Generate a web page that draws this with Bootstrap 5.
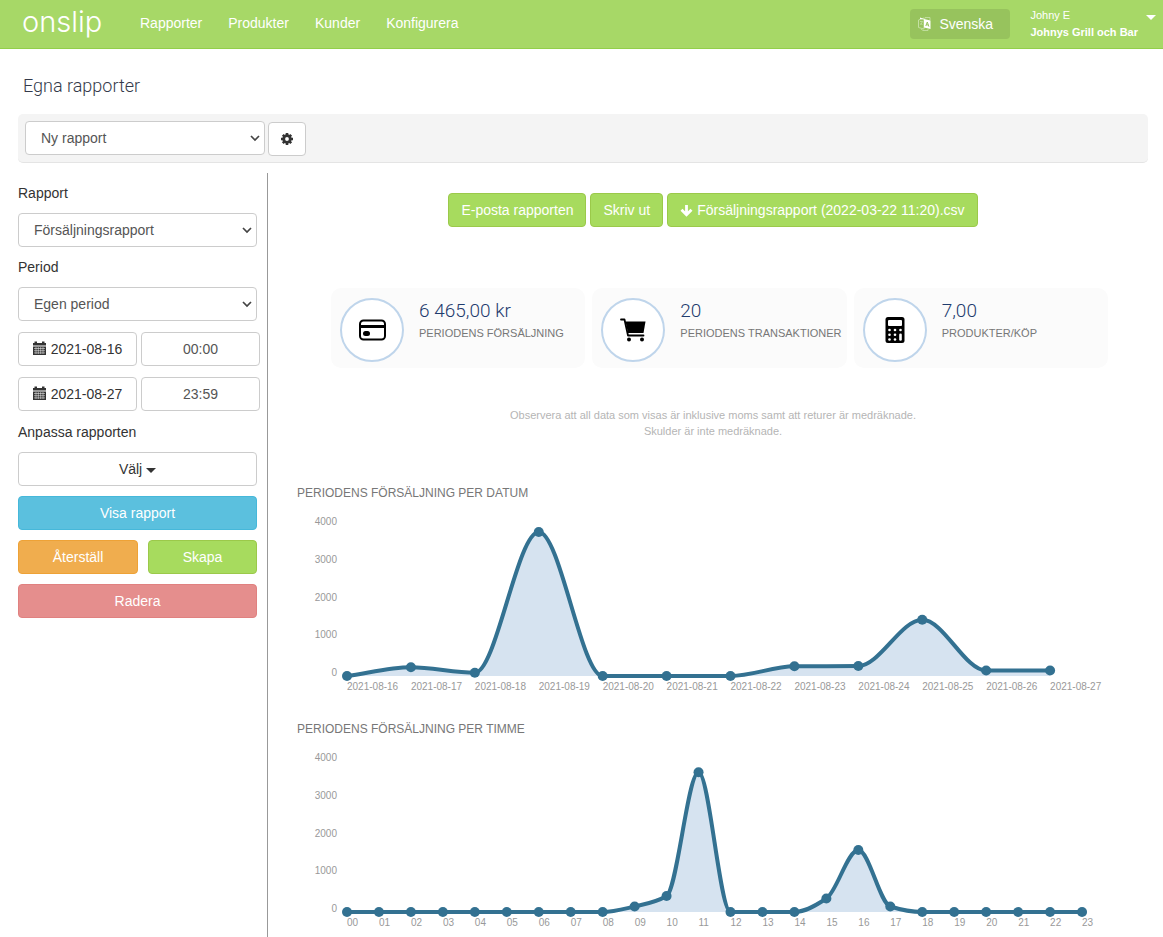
<!DOCTYPE html>
<html lang="sv">
<head>
<meta charset="utf-8">
<meta name="viewport" content="width=device-width, initial-scale=1">
<title>Egna rapporter – Onslip</title>
<link href="https://cdn.jsdelivr.net/npm/bootstrap@5.3.0/dist/css/bootstrap.min.css" rel="stylesheet">
<style>
  body { font-family: "Liberation Sans", Arial, sans-serif; font-size: 14px; line-height: 20px; color: #333; background: #fff; }
  .topbar { background: #a7d867; border-bottom: 1px solid #92cf4a; padding: 0 7px 0 22px; min-height: 49px; }
  .logo { font: 300 29px/44px Inter, sans-serif; color: #fff; width: 105px; height: 44px; }
  .logo:hover { color: #fff; }
  .topbar .nav-link { color: #fff; padding: 13px 13px 15px; }
  .lang-btn { background: #97c35d; color: #fff; width: 100px; height: 30px; border: 0; border-radius: 4px; padding: 0 8px; margin-top: 9px; font-size: 14px; }
  .user-btn { background: none; border: 0; color: #fff; font-size: 11px; line-height: 17px; text-align: left; padding: 7px 0 0; }
  .caret { display: inline-block; border: 5px solid transparent; border-top-color: currentColor; border-bottom: 0; vertical-align: middle; }
  .page-title { font: 300 18px/24px Roboto, sans-serif; color: #343a4a; padding: 25px 23px 16px; margin: 0; }
  .toolbar { margin: 0 15px 10px 18px; padding: 7px 7px 6px; background: #f4f4f4; border-bottom: 1px solid #e4e4e4; border-radius: 5px; gap: 3px; }
  .toolbar .form-select { width: 240px; margin-bottom: 1px; }
  .form-select, .form-control, .btn { height: 34px; font-size: 14px; line-height: 20px; border-radius: 4px; }
  .form-select, .form-control { border-color: #ccc; color: #555; }
  .form-select { padding: 6px 24px 6px 15px; background-size: 12px 12px; background-position: right 3px center;
    background-image: url("data:image/svg+xml,%3csvg xmlns='http://www.w3.org/2000/svg' viewBox='0 0 12 12'%3e%3cpath fill='none' stroke='%23444' stroke-width='1.7' d='M2 4l4 4 4-4'/%3e%3c/svg%3e"); }
  .btn { padding: 6px 12px; }
  .btn-plain { background: #fff; border-color: #ccc; color: #333; }
  .btn-green { background: #a7db5e; border-color: #9bc94a; color: #fff; }
  .btn-blue { background: #5bc0de; border-color: #46b8da; color: #fff; }
  .btn-orange { background: #f0ad4e; border-color: #eea236; color: #fff; }
  .btn-red { background: #e58e8d; border-color: #e08180; color: #fff; }
  .sidebar { width: 268px; padding: 10px 7px 20px 18px; border-right: 1px solid #999; }
  .side-block { margin-right: 3px; }
  .sidebar label, .side-label { display: block; margin: 0 0 10px; }
  .sidebar .form-select { margin-bottom: 10px; }
  .period-rows { display: grid; gap: 11px; padding: 1px 0 11px; }
  .period-row { display: grid; grid-template-columns: 1fr 1fr; gap: 4px; }
  .period-row .btn { padding: 6px 0; }
  .cal-icon { width: 13px; height: 14px; vertical-align: -1px; margin-right: 5px; }
  .side-actions { display: grid; gap: 10px; grid-template-columns: 120fr 109fr; }
  .side-actions .wide { grid-column: 1 / -1; }
  .report { margin-right: 5px; padding: 20px 29px 0; min-width: 0; }
  .report-actions { gap: 4px; margin-bottom: 61px; }
  .stats { display: grid; grid-template-columns: repeat(3, 1fr); gap: 7px; margin: 0 21px 39px 34px; }
  .stat { display: flex; height: 80px; background: #fbfbfb; border-radius: 10px; padding: 10px 0 0 9px; gap: 15px; }
  .stat-icon { width: 64px; height: 64px; flex: none; border: 2px solid #bfd5eb; border-radius: 50%; background: #fff; display: flex; align-items: center; justify-content: center; }
  .stat-value { font: 300 19px/26px Roboto, sans-serif; color: #1f3c6e; }
  .stat-label { font-size: 11px; line-height: 18px; color: #777; white-space: nowrap; }
  .note { font-size: 11px; line-height: 16px; color: #b5b5b5; margin: 0 0 45px; }
  .chart-title { font-size: 12px; line-height: 18px; color: #777; margin: 0; }
  .chart-box { height: 218px; }
  .chart-box svg { display: block; width: 100%; height: 100%; overflow: visible; }
  .chart-box text { font-size: 10px; fill: #999; }
</style>
</head>
<body class="d-flex flex-column min-vh-100">
<header class="topbar d-flex align-items-start">
  <a class="logo text-decoration-none" href="#">onslip</a>
  <nav class="nav me-auto" aria-label="Huvudmeny">
    <a class="nav-link" href="#">Rapporter</a>
    <a class="nav-link" href="#">Produkter</a>
    <a class="nav-link" href="#">Kunder</a>
    <a class="nav-link" href="#">Konfigurera</a>
  </nav>
  <div class="d-flex align-items-start">
    <button class="lang-btn d-flex align-items-center gap-2" type="button">
      <svg width="13" height="14" viewBox="0 0 13 14" aria-hidden="true">
        <path d="M.5 3 6 1v11L.5 10.500z" fill="none" stroke="#c4e0a3"/>
        <path d="M2 4.500h2.500L2.500 8M2.500 6l2 2" fill="none" stroke="#c4e0a3" stroke-width=".8"/>
        <path d="M7 1.500V.5h5V3m-9 9 2 1.500h5V12" fill="none" stroke="#c4e0a3" stroke-width=".9"/>
        <path d="M2 .5 6 2l6.500 1.500V12L6 10.500V2.500L2 2z" fill="#fff"/>
        <path d="M7.800 9l1.500-4 1.600 4.600M8.300 7.700l2 .3" fill="none" stroke="#97c35d"/>
      </svg>
      Svenska
    </button>
    <button class="user-btn d-flex ms-3" type="button">
      <span class="ps-1 pe-2">Johny E<br><strong>Johnys Grill och Bar</strong></span>
      <span class="caret mt-2"></span>
    </button>
  </div>
</header>

<h1 class="page-title">Egna rapporter</h1>

<div class="toolbar d-flex align-items-end">
  <select class="form-select" aria-label="Sparad rapport"><option>Ny rapport</option></select>
  <button class="btn btn-plain d-flex align-items-center" type="button" aria-label="Inställningar">
    <svg width="12" height="12" viewBox="0 0 12 12" aria-hidden="true">
      <path d="M6 0v12M0 6h12M1.800 1.800l8.400 8.400M10.200 1.800l-8.400 8.400" stroke="#333" stroke-width="2.600"/>
      <circle cx="6" cy="6" r="3.300" fill="#fff" stroke="#333" stroke-width="2.800"/>
    </svg>
  </button>
</div>

<div class="d-flex flex-grow-1">
  <aside class="sidebar flex-shrink-0">
    <div class="side-block">
      <label for="report">Rapport</label>
      <select class="form-select" id="report"><option>Försäljningsrapport</option></select>
      <label for="period">Period</label>
      <select class="form-select" id="period"><option>Egen period</option></select>
    </div>
    <div class="period-rows">
      <div class="period-row">
        <button class="btn btn-plain" type="button"><svg class="cal-icon" viewBox="0 0 13 14" aria-hidden="true"><use href="#cal"/></svg>2021-08-16</button>
        <input class="form-control text-center" aria-label="Från klockan" value="00:00">
      </div>
      <div class="period-row">
        <button class="btn btn-plain" type="button"><svg class="cal-icon" viewBox="0 0 13 14" aria-hidden="true"><use href="#cal"/></svg>2021-08-27</button>
        <input class="form-control text-center" aria-label="Till klockan" value="23:59">
      </div>
    </div>
    <div class="side-block">
      <div class="side-label">Anpassa rapporten</div>
      <div class="side-actions">
        <button class="btn btn-plain wide" type="button">Välj <span class="caret"></span></button>
        <button class="btn btn-blue wide" type="button">Visa rapport</button>
        <button class="btn btn-orange" type="button">Återställ</button>
        <button class="btn btn-green" type="button">Skapa</button>
        <button class="btn btn-red wide" type="button">Radera</button>
      </div>
    </div>
  </aside>

  <main class="report flex-grow-1">
    <div class="report-actions d-flex flex-wrap justify-content-center">
      <button class="btn btn-green" type="button">E-posta rapporten</button>
      <button class="btn btn-green" type="button">Skriv ut</button>
      <button class="btn btn-green" type="button"><svg class="me-1" width="13" height="12" viewBox="0 0 13 12" aria-hidden="true"><path d="M6.500 0v9M1.500 4.700l5 5 5-5" fill="none" stroke="#fff" stroke-width="2.800"/></svg>Försäljningsrapport (2022-03-22 11:20).csv</button>
    </div>

    <section class="stats">
      <div class="stat">
        <div class="stat-icon">
          <svg width="28" height="24" viewBox="0 0 28 24" aria-hidden="true">
            <rect x="2" y="2.500" width="25" height="19" rx="3.500" fill="none" stroke="#000" stroke-width="2"/>
            <path d="M2 7h25v3H2z"/>
            <rect x="5" y="13" width="7" height="5" rx="2.500"/>
          </svg>
        </div>
        <div><div class="stat-value">6 465,00 kr</div><div class="stat-label">PERIODENS FÖRSÄLJNING</div></div>
      </div>
      <div class="stat">
        <div class="stat-icon">
          <svg width="26" height="24" viewBox="0 0 26 24" aria-hidden="true">
            <path d="M1 1.500h3.500L8 17.500h15.500" fill="none" stroke="#000" stroke-width="1.800" stroke-linejoin="round" stroke-linecap="round"/>
            <path d="M5.500 3.500h20l-2 11.500H8z"/>
            <circle cx="9" cy="21.500" r="2"/><circle cx="22" cy="21.500" r="2"/>
          </svg>
        </div>
        <div><div class="stat-value">20</div><div class="stat-label">PERIODENS TRANSAKTIONER</div></div>
      </div>
      <div class="stat">
        <div class="stat-icon">
          <svg width="20" height="26" viewBox="0 0 20 26" aria-hidden="true">
            <rect x=".5" width="19" height="26" rx="2.500"/>
            <g fill="#fff">
              <rect x="3" y="3" width="14" height="6" rx="1"/>
              <circle cx="4.500" cy="13" r="1.300"/><circle cx="10" cy="13" r="1.300"/><circle cx="15.500" cy="13" r="1.300"/>
              <circle cx="4.500" cy="17.800" r="1.300"/><circle cx="10" cy="17.800" r="1.300"/>
              <circle cx="4.500" cy="22.500" r="1.300"/><circle cx="10" cy="22.500" r="1.300"/>
              <rect x="14.200" y="16.500" width="2.600" height="7.300" rx="1.300"/>
            </g>
          </svg>
        </div>
        <div><div class="stat-value">7,00</div><div class="stat-label">PRODUKTER/KÖP</div></div>
      </div>
    </section>

    <p class="note text-center">Observera att all data som visas är inklusive moms samt att returer är medräknade.<br>Skulder är inte medräknade.</p>

    <h2 class="chart-title">PERIODENS FÖRSÄLJNING PER DATUM</h2>
    <div class="chart-box" id="byDate"></div>
    <h2 class="chart-title">PERIODENS FÖRSÄLJNING PER TIMME</h2>
    <div class="chart-box" id="byHour"></div>
  </main>
</div>

<svg class="d-none" aria-hidden="true">
  <symbol id="cal" viewBox="0 0 13 14">
    <path d="M0 2h1.500V.5h2.500V2h5V.5h2.500V2H13v2.500H0zM0 5.500h13V14H0z" fill="#333"/>
    <path d="M1 7.500h11M1 9.700h11M1 11.900h11M3 6v7M5.300 6v7M7.700 6v7M10 6v7" stroke="#fff" stroke-width=".5"/>
  </symbol>
</svg>

<script src="https://cdn.jsdelivr.net/npm/bootstrap@5.3.0/dist/js/bootstrap.bundle.min.js"></script>
<script>
  const pad = n => String(n).padStart(2, '0');
  const byDate = [0, 230, 87, 3815, 0, 0, 0, 257, 265, 1491, 146, 146];
  const byHour = [0, 0, 0, 0, 0, 0, 0, 0, 0, 146, 424, 3700, 0, 0, 0, 358, 1642, 146, 0, 0, 0, 0, 0, 0];

  // Monotone cubic interpolation, so the curve never overshoots its points
  function curve(pts, dx) {
    const d = pts.slice(1).map((p, i) => (p[1] - pts[i][1]) / dx);
    const m = pts.map((p, i) => {
      if (i === 0) return d[0];
      if (i === pts.length - 1) return d[i - 1];
      return d[i - 1] * d[i] <= 0 ? 0 : 2 * d[i - 1] * d[i] / (d[i - 1] + d[i]);
    });
    return pts.slice(1).map((p, i) =>
      `C${pts[i][0] + dx / 3},${pts[i][1] + m[i] * dx / 3} ${p[0] - dx / 3},${p[1] - m[i + 1] * dx / 3} ${p[0]},${p[1]}`).join('');
  }

  function draw(id, values, labels) {
    const box = document.getElementById(id);
    const left = 50, base = 174, height = 151;
    const dx = (box.clientWidth - left - 15) / values.length;
    const pts = values.map((v, i) => [left + i * dx, base - v / 4000 * height]);
    const line = `M${pts[0]}` + curve(pts, dx);
    let out = `<path d="${line}L${pts[pts.length - 1][0]},${base}H${left}Z" fill="#d6e3f0"/>`;
    out += `<path d="${line}" fill="none" stroke="#337191" stroke-width="4"/>`;
    pts.forEach((p, i) => {
      out += `<circle cx="${p[0]}" cy="${p[1]}" r="5" fill="#337191"/><text x="${p[0]}" y="${base + 14}">${labels[i]}</text>`;
    });
    for (let v = 0; v <= 4000; v += 1000)
      out += `<text x="40" y="${base - v / 4000 * height}" text-anchor="end">${v}</text>`;
    box.innerHTML = `<svg role="img" aria-label="Försäljning">${out}</svg>`;
  }

  function drawAll() {
    draw('byDate', byDate, byDate.map((_, i) => '2021-08-' + (16 + i)));
    draw('byHour', byHour, byHour.map((_, i) => pad(i)));
  }
  drawAll();
  window.addEventListener('resize', drawAll);
</script>
</body>
</html>
